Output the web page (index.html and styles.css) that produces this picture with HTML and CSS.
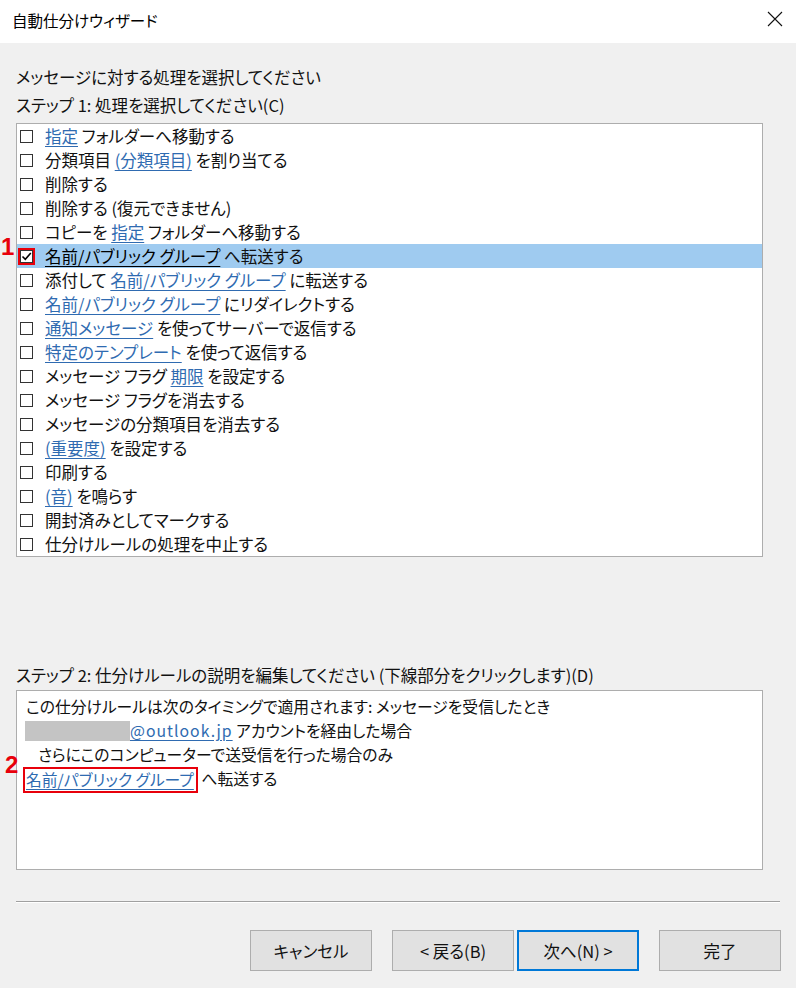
FILE: index.html
```html
<!DOCTYPE html>
<html lang="ja">
<head>
<meta charset="utf-8">
<title>自動仕分けウィザード</title>
<link rel="stylesheet" href="styles.css">
</head>
<body>
<div class="window">
  <div class="titlebar">
    <span class="title">自動仕分けウィザード</span>
    <svg class="close" width="16" height="16" viewBox="0 0 16 16"><path d="M1 1 L15 15 M15 1 L1 15" stroke="#111" stroke-width="1.1" fill="none"/></svg>
  </div>
  <div class="content">
    <div class="label intro">メッセージに対する処理を選択してください</div>
    <div class="label step1">ステップ 1: 処理を選択してください(C)</div>
    <div class="listbox">
      <div class="row"><span class="cb"></span><span><a class="lnk">指定</a> フォルダーへ移動する</span></div>
      <div class="row"><span class="cb"></span><span>分類項目 <a class="lnk">(分類項目)</a> を割り当てる</span></div>
      <div class="row"><span class="cb"></span><span>削除する</span></div>
      <div class="row"><span class="cb"></span><span>削除する (復元できません)</span></div>
      <div class="row"><span class="cb"></span><span>コピーを <a class="lnk">指定</a> フォルダーへ移動する</span></div>
      <div class="row selected">
        <span class="num num1">1</span>
        <span class="cb checked"><svg width="11" height="11" viewBox="0 0 11 11"><path d="M1.5 5.5 L4.3 8.3 L9.8 2" stroke="#000" stroke-width="1.6" fill="none"/></svg></span>
        <span><a class="lnk">名前/パブリック グループ</a> へ転送する</span>
      </div>
      <div class="row"><span class="cb"></span><span>添付して <a class="lnk">名前/パブリック グループ</a> に転送する</span></div>
      <div class="row"><span class="cb"></span><span><a class="lnk">名前/パブリック グループ</a> にリダイレクトする</span></div>
      <div class="row"><span class="cb"></span><span><a class="lnk">通知メッセージ</a> を使ってサーバーで返信する</span></div>
      <div class="row"><span class="cb"></span><span><a class="lnk">特定のテンプレート</a> を使って返信する</span></div>
      <div class="row"><span class="cb"></span><span>メッセージ フラグ <a class="lnk">期限</a> を設定する</span></div>
      <div class="row"><span class="cb"></span><span>メッセージ フラグを消去する</span></div>
      <div class="row"><span class="cb"></span><span>メッセージの分類項目を消去する</span></div>
      <div class="row"><span class="cb"></span><span><a class="lnk">(重要度)</a> を設定する</span></div>
      <div class="row"><span class="cb"></span><span>印刷する</span></div>
      <div class="row"><span class="cb"></span><span><a class="lnk">(音)</a> を鳴らす</span></div>
      <div class="row"><span class="cb"></span><span>開封済みとしてマークする</span></div>
      <div class="row"><span class="cb"></span><span>仕分けルールの処理を中止する</span></div>
    </div>
    <div class="label step2">ステップ 2: 仕分けルールの説明を編集してください (下線部分をクリックします)(D)</div>
    <div class="descbox">
      <span class="num num2">2</span>
      <div class="dline">この仕分けルールは次のタイミングで適用されます: メッセージを受信したとき</div>
      <div class="dline"><span class="masked"></span><a class="lnk mail">@outlook.jp</a> アカウントを経由した場合</div>
      <div class="dline indent">さらにこのコンピューターで送受信を行った場合のみ</div>
      <div class="dline last"><span class="annot"><a class="lnk">名前/パブリック グループ</a></span> へ転送する</div>
    </div>
  </div>
  <div class="separator"></div>
  <div class="buttons">
    <button class="btn cancel">キャンセル</button>
    <button class="btn back">&lt; 戻る(B)</button>
    <button class="btn next default">次へ(N) &gt;</button>
    <button class="btn finish">完了</button>
  </div>
</div>
</body>
</html>
```

FILE: styles.css
```css
* { box-sizing: border-box; }
html, body {
  margin: 0;
  padding: 0;
}
body {
  width: 796px;
  height: 988px;
  background: #f0f0f0;
  font-family: "Noto Sans CJK JP", "Noto Sans", sans-serif;
  font-size: 16.5px;
  font-feature-settings: "palt";
  color: #111;
  overflow: hidden;
}
.window {
  width: 796px;
  height: 988px;
}
.titlebar {
  height: 43px;
  background: #fff;
  display: flex;
  align-items: center;
  justify-content: space-between;
  padding: 0 13px 0 12px;
}
.title {
  font-size: 15.5px;
  line-height: 20px;
  margin-top: -4px;
  color: #000;
}
.close {
  margin-top: -5px;
}
.content {
  padding: 0 33px 0 16px;
  position: relative;
}
.label {
  line-height: 24px;
  height: 24px;
  white-space: nowrap;
}
.intro { margin-top: 22px; }
.step1 { margin-top: 4px; }
.listbox {
  margin-top: 6px;
  height: 434px;
  background: #fff;
  border: 1px solid #adadad;
  position: relative;
}
.row {
  height: 24px;
  display: flex;
  align-items: center;
  padding-left: 3px;
  gap: 12px;
  white-space: nowrap;
  line-height: 24px;
  position: relative;
}
.row.selected {
  background: #9fcbf0;
}
.cb {
  width: 13px;
  height: 13px;
  border: 1px solid #333;
  background: #fff;
  flex: none;
  display: flex;
  align-items: center;
  justify-content: center;
}
.cb.checked {
  outline: 2px solid #e8000b;
  outline-offset: 0px;
}
.lnk {
  color: #2f6bb1;
  text-decoration: underline;
  text-underline-offset: 3px;
}
.selected .lnk {
  color: #000;
}
.num {
  position: absolute;
  color: #e8000b;
  font-family: "Liberation Sans", Arial, sans-serif;
  font-weight: bold;
  font-size: 24px;
  line-height: 24px;
}
.num1 {
  left: -16px;
  top: -9px;
}
.step2 { margin-top: 106px; }
.descbox {
  margin-top: 3px;
  height: 180px;
  background: #fff;
  border: 1px solid #adadad;
  padding: 4px 0 0 9px;
  position: relative;
  font-size: 15.8px;
}
.num2 {
  left: -12px;
  top: 62px;
}
.dline {
  height: 24px;
  line-height: 24px;
  white-space: nowrap;
}
.masked {
  display: inline-block;
  width: 105px;
  height: 20px;
  margin-left: -1px;
  vertical-align: middle;
  margin-top: -3px;
  background: #c4c4c4;
}
.mail {
  letter-spacing: 1px;
}
.indent {
  padding-left: 12px;
}
.annot {
  display: inline-block;
  border: 2px solid #e8000b;
  line-height: 22px;
  height: 26px;
  padding: 0 2px 0 1px;
  margin-left: -3px;
  vertical-align: top;
}
.separator {
  margin: 31px 16px 0 16px;
  height: 2px;
  border-top: 1px solid #a0a0a0;
  border-bottom: 1px solid #fff;
}
.buttons {
  margin-top: 27px;
  display: flex;
  padding-left: 250px;
}
.btn {
  width: 122px;
  height: 41px;
  background: #e1e1e1;
  border: 1px solid #adadad;
  font-family: inherit;
  font-size: 16.5px;
  font-feature-settings: "palt";
  color: #111;
  padding: 0;
}
.btn.default {
  border: 2px solid #0078d7;
}
.back { margin-left: 20px; }
.next { margin-left: 3px; }
.finish { margin-left: 20px; }
```
